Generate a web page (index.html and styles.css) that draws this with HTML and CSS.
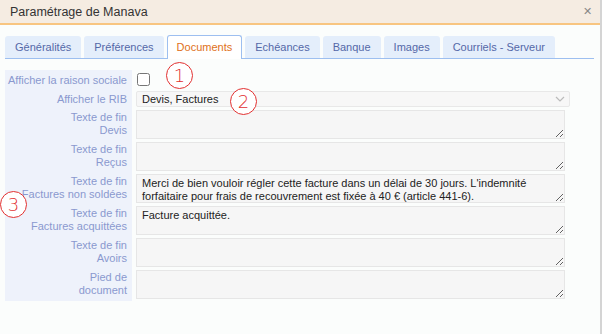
FILE: index.html
```html
<!DOCTYPE html>
<html lang="fr">
<head>
    <meta charset="UTF-8">
    <title>Paramétrage de Manava</title>
    <link rel="stylesheet" href="styles.css">
</head>
<body>
    <div class="dialog">
        <div class="dialog-header">
            <span class="dialog-title">Paramétrage de Manava</span>
            <span class="dialog-close">&#x2715;</span>
        </div>

        <div class="tabs">
            <div class="tab">Généralités</div>
            <div class="tab">Préférences</div>
            <div class="tab active">Documents</div>
            <div class="tab">Echéances</div>
            <div class="tab">Banque</div>
            <div class="tab">Images</div>
            <div class="tab">Courriels - Serveur</div>
        </div>

        <div class="form">
            <div class="label row-check">Afficher la raison sociale</div>
            <div class="field row-check"><input type="checkbox" class="check"></div>

            <div class="label row-select">Afficher le RIB</div>
            <div class="field row-select">
                <div class="select">
                    <span>Devis, Factures</span>
                    <svg width="10" height="6" viewBox="0 0 10 6"><path d="M1 1 L5 5 L9 1" fill="none" stroke="#bbb" stroke-width="1.2"/></svg>
                </div>
            </div>

            <div class="label">Texte de fin<br>Devis</div>
            <div class="field"><textarea></textarea></div>

            <div class="label">Texte de fin<br>Reçus</div>
            <div class="field"><textarea></textarea></div>

            <div class="label">Texte de fin<br>Factures non soldées</div>
            <div class="field"><textarea>Merci de bien vouloir régler cette facture dans un délai de 30 jours. L'indemnité forfaitaire pour frais de recouvrement est fixée à 40 € (article 441-6).</textarea></div>

            <div class="label">Texte de fin<br>Factures acquittées</div>
            <div class="field"><textarea>Facture acquittée.</textarea></div>

            <div class="label">Texte de fin<br>Avoirs</div>
            <div class="field"><textarea></textarea></div>

            <div class="label">Pied de<br>document</div>
            <div class="field"><textarea></textarea></div>
        </div>

        <!-- annotations -->
        <span class="mark mark-1">1</span>
        <span class="mark mark-2">2</span>
        <span class="mark mark-3">3</span>
    </div>
</body>
</html>
```

FILE: styles.css
```css
body {
    margin: 0;
    padding: 0;
    font-family: 'Liberation Sans', Arial, sans-serif;
    font-size: 11px;
    background: #fbfdfc;
}

.dialog {
    position: relative;
    width: 600px;
    height: 334px;
    background: #fbfdfc;
    border-right: 2px solid #d4d4d4;
}

.dialog-header {
    height: 23px;
    background: #f5ece2;
    border-bottom: 2px solid #f8c580;
    display: flex;
    align-items: center;
    justify-content: space-between;
    padding: 0 10px;
}

.dialog-title {
    font-size: 12.5px;
    color: #333;
}

.dialog-close {
    font-size: 11px;
    color: #888;
    margin-right: -2px;
}

.tabs {
    display: flex;
    gap: 3px;
    margin: 11px 6px 0 5px;
    border-bottom: 1px solid #9dbff0;
    height: 22px;
}

.tab {
    background: #e4eefb;
    color: #5468a8;
    padding: 0 10px;
    line-height: 22px;
    border-radius: 3px 3px 0 0;
    white-space: nowrap;
}

.tab.active {
    background: #fff;
    color: #e07020;
    border: 1px solid #9dbff0;
    border-bottom: none;
    padding: 0 9px;
    margin-top: -1px;
    height: 23px;
}

.form {
    display: grid;
    grid-template-columns: 127px 1fr;
    column-gap: 4px;
    margin: 11px 0 0 5px;
}

.label {
    background: #eef2fb;
    color: #8a99cf;
    text-align: right;
    padding: 2px 5px 0 0;
    line-height: 13px;
    height: 30px;
    white-space: nowrap;
}

.label.row-check {
    box-sizing: border-box;
    height: 20px;
    padding-top: 3px;
    line-height: 15px;
}

.label.row-select {
    height: 19px;
    padding: 0 5px 0 0;
    line-height: 19px;
}

.field {
    padding-top: 1px;
}

.field.row-check {
    height: 19px;
}

.field.row-select {
    height: 18px;
}

.check {
    margin: 2px 0 0 1px;
    width: 13px;
    height: 13px;
}

.select {
    width: 434px;
    height: 16px;
    box-sizing: border-box;
    border: 1px solid #e8e8e8;
    background: #f7f7f7;
    border-radius: 2px;
    display: flex;
    align-items: center;
    justify-content: space-between;
    padding: 0 4px 0 5px;
    color: #222;
}

textarea {
    display: block;
    width: 429px;
    height: 29px;
    box-sizing: border-box;
    margin: 0;
    border: 1px solid #e6e6e6;
    background: #f6f6f6;
    font-family: inherit;
    font-size: 11px;
    line-height: 13px;
    color: #222;
    padding: 2px 5px;
    overflow: hidden;
}

.mark {
    position: absolute;
    width: 25px;
    height: 25px;
    border: 1.6px solid #e23030;
    border-radius: 50%;
    color: #e23030;
    font-family: 'DejaVu Sans', sans-serif;
    font-weight: 200;
    font-size: 18px;
    line-height: 25px;
    text-align: center;
    background: #fff;
}

.mark-1 { left: 166px; top: 62px; }
.mark-2 { left: 230px; top: 88px; }
.mark-3 { left: 0px; top: 191px; }
```
